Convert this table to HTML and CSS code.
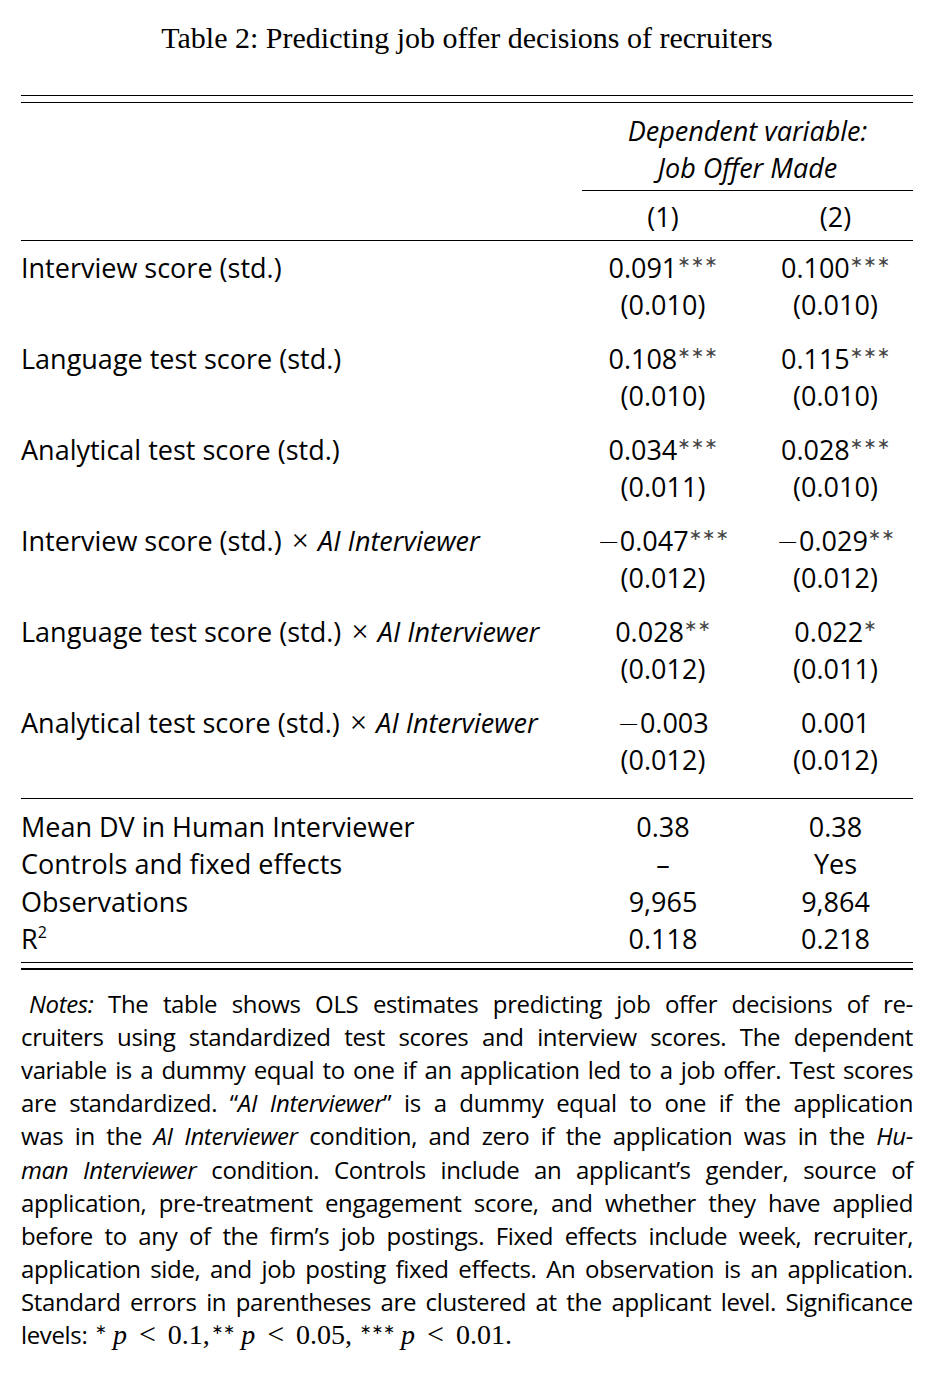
FILE: index.html
```html
<!DOCTYPE html>
<html lang="en">
<head>
<meta charset="utf-8">
<title>Table 2</title>
<link rel="stylesheet" href="styles.css">
</head>
<body>
<div class="page">
  <h1 class="caption">Table 2: Predicting job offer decisions of recruiters</h1>

  <div class="table">
    <div class="rule thin"></div>
    <div class="rule thin gap6"></div>

    <div class="head">
      <div class="depvar"><i>Dependent variable:</i></div>
      <div class="depvar"><i>Job Offer Made</i></div>
    </div>
    <div class="cmid"></div>
    <div class="row colnums">
      <div class="label"></div>
      <div class="c1">(1)</div>
      <div class="c2">(2)</div>
    </div>
    <div class="rule thin"></div>

    <div class="body">
      <div class="group">
        <div class="row"><div class="label">Interview score (std.)</div><div class="c1">0.091<sup class="st">∗∗∗</sup></div><div class="c2">0.100<sup class="st">∗∗∗</sup></div></div>
        <div class="row"><div class="label"></div><div class="c1">(0.010)</div><div class="c2">(0.010)</div></div>
      </div>
      <div class="group">
        <div class="row"><div class="label">Language test score (std.)</div><div class="c1">0.108<sup class="st">∗∗∗</sup></div><div class="c2">0.115<sup class="st">∗∗∗</sup></div></div>
        <div class="row"><div class="label"></div><div class="c1">(0.010)</div><div class="c2">(0.010)</div></div>
      </div>
      <div class="group">
        <div class="row"><div class="label">Analytical test score (std.)</div><div class="c1">0.034<sup class="st">∗∗∗</sup></div><div class="c2">0.028<sup class="st">∗∗∗</sup></div></div>
        <div class="row"><div class="label"></div><div class="c1">(0.011)</div><div class="c2">(0.010)</div></div>
      </div>
      <div class="group">
        <div class="row"><div class="label">Interview score (std.)<span class="times">×</span><i>AI Interviewer</i></div><div class="c1"><span class="minus">−</span>0.047<sup class="st">∗∗∗</sup></div><div class="c2"><span class="minus">−</span>0.029<sup class="st">∗∗</sup></div></div>
        <div class="row"><div class="label"></div><div class="c1">(0.012)</div><div class="c2">(0.012)</div></div>
      </div>
      <div class="group">
        <div class="row"><div class="label">Language test score (std.)<span class="times">×</span><i>AI Interviewer</i></div><div class="c1">0.028<sup class="st">∗∗</sup></div><div class="c2">0.022<sup class="st">∗</sup></div></div>
        <div class="row"><div class="label"></div><div class="c1">(0.012)</div><div class="c2">(0.011)</div></div>
      </div>
      <div class="group">
        <div class="row"><div class="label">Analytical test score (std.)<span class="times">×</span><i>AI Interviewer</i></div><div class="c1"><span class="minus">−</span>0.003</div><div class="c2">0.001</div></div>
        <div class="row"><div class="label"></div><div class="c1">(0.012)</div><div class="c2">(0.012)</div></div>
      </div>
    </div>

    <div class="rule thin"></div>

    <div class="stats">
      <div class="row"><div class="label">Mean DV in Human Interviewer</div><div class="c1">0.38</div><div class="c2">0.38</div></div>
      <div class="row"><div class="label">Controls and fixed effects</div><div class="c1">–</div><div class="c2">Yes</div></div>
      <div class="row"><div class="label">Observations</div><div class="c1">9,965</div><div class="c2">9,864</div></div>
      <div class="row"><div class="label">R<sup class="sq">2</sup></div><div class="c1">0.118</div><div class="c2">0.218</div></div>
    </div>

    <div class="rule thin"></div>
    <div class="rule thick gap5"></div>
  </div>

  <div class="notes">
    <div class="ln first"><i>Notes:</i> The table shows OLS estimates predicting job offer decisions of re-</div>
    <div class="ln">cruiters using standardized test scores and interview scores. The dependent</div>
    <div class="ln">variable is a dummy equal to one if an application led to a job offer. Test scores</div>
    <div class="ln">are standardized. “<i>AI Interviewer</i>” is a dummy equal to one if the application</div>
    <div class="ln">was in the <i>AI Interviewer</i> condition, and zero if the application was in the <i>Hu-</i></div>
    <div class="ln"><i>man Interviewer</i> condition. Controls include an applicant’s gender, source of</div>
    <div class="ln">application, pre-treatment engagement score, and whether they have applied</div>
    <div class="ln">before to any of the firm’s job postings. Fixed effects include week, recruiter,</div>
    <div class="ln">application side, and job posting fixed effects. An observation is an application.</div>
    <div class="ln">Standard errors in parentheses are clustered at the applicant level. Significance</div>
    <div class="ln last">levels: <sup class="nst">∗</sup> <span class="math"><i>p</i><span class="rel">&lt;</span>0.1,</span><sup class="nst">∗∗</sup> <span class="math"><i>p</i><span class="rel">&lt;</span>0.05,</span> <sup class="nst">∗∗∗</sup> <span class="math"><i>p</i><span class="rel">&lt;</span>0.01.</span></div>
  </div>
</div>
</body>
</html>
```

FILE: styles.css
```css
html, body {
  margin: 0;
  padding: 0;
  background: #ffffff;
}

body {
  color: #000000;
  font-family: "Open Sans", "Noto Sans", sans-serif;
}

.page {
  width: 936px;
  padding: 0 23px 0 21px;
  box-sizing: border-box;
}

.caption {
  margin: 0;
  padding-top: 18px;
  height: 40px;
  line-height: 40px;
  text-align: center;
  font-family: "Liberation Serif", "Times New Roman", serif;
  font-weight: normal;
  font-size: 30px;
}

.table {
  margin-top: 37px;
}

.rule {
  height: 0;
  border-top: 1px solid #000;
}
.rule.thick {
  border-top-width: 2px;
}
.rule.gap6 {
  margin-top: 6px;
}
.rule.gap5 {
  margin-top: 5px;
}

.row {
  display: grid;
  grid-template-columns: 561px 162px 169px;
  font-size: 27px;
  height: 37px;
  line-height: 37px;
  white-space: nowrap;
}

.c1 {
  text-align: center;
}
.c2 {
  text-align: center;
  padding-left: 14px;
}

.head {
  padding-top: 9px;
  padding-left: 561px;
  font-size: 27px;
  line-height: 37px;
}
.depvar {
  height: 37px;
  text-align: center;
  white-space: nowrap;
}

.cmid {
  margin-left: 561px;
  border-top: 1px solid #000;
  margin-top: 4px;
}

.colnums {
  padding-top: 7px;
  padding-bottom: 5px;
}

.body {
  padding-top: 8px;
  padding-bottom: 12px;
}
.group {
  padding-bottom: 17px;
}
.group:last-child {
  padding-bottom: 8px;
}

.st {
  font-family: "DejaVu Sans", sans-serif;
  font-size: 16px;
  line-height: 0;
  vertical-align: 11px;
  color: #444;
}

.minus {
  font-family: "DejaVu Sans", sans-serif;
  font-weight: 200;
  line-height: 0;
}

.times {
  font-family: "Liberation Serif", serif;
  font-size: 31px;
  margin: 0 9px 0 10px;
  line-height: 0;
}

.sq {
  font-size: 16px;
  line-height: 0;
  vertical-align: 11px;
}

.stats {
  padding-top: 9px;
  padding-bottom: 4px;
}
.stats .row {
  height: 37.4px;
  line-height: 37.4px;
}

.notes {
  margin-top: 17px;
  font-size: 24px;
  line-height: 33.2px;
  letter-spacing: -0.35px;
}

.ln {
  height: 33.2px;
  text-align: justify;
  text-align-last: justify;
  white-space: nowrap;
}
.ln.first {
  padding-left: 8px;
}
.ln.last {
  text-align: left;
  text-align-last: left;
}

.nst {
  font-family: "DejaVu Sans", sans-serif;
  font-size: 14px;
  line-height: 0;
  vertical-align: 10px;
  letter-spacing: 0;
  margin-left: 2px;
}

.math {
  font-family: "Liberation Serif", serif;
  font-size: 28px;
  line-height: 0;
  letter-spacing: 0;
}
.rel {
  font-size: 30px;
  margin: 0 12px;
}
```
